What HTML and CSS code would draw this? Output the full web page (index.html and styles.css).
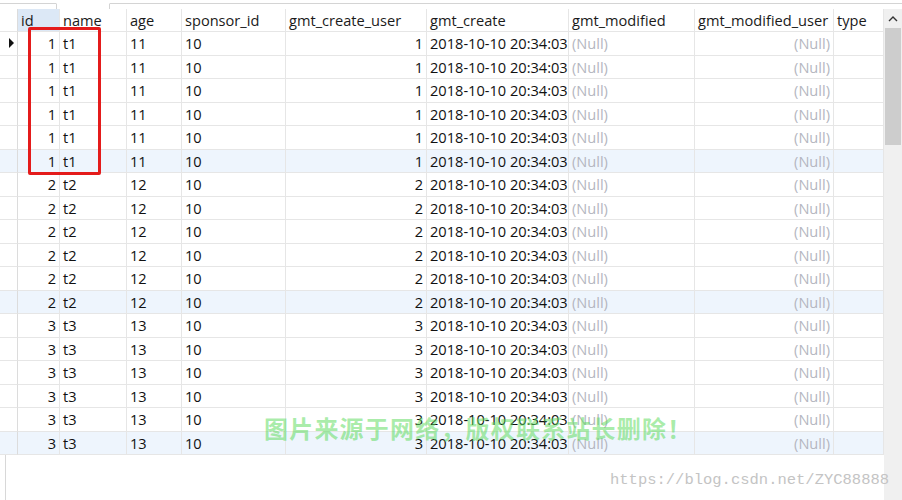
FILE: index.html
```html
<!DOCTYPE html>
<html>
<head>
<meta charset="utf-8">
<link rel="stylesheet" href="styles.css">
</head>
<body>
<div class="window">
  <div class="tabstrip"><span class="tab"></span><span class="tab tab-active"></span><span class="tab"></span></div>
  <div class="main">
    <div class="grid">
      <div class="row head">
        <div class="cell ind"></div>
        <div class="cell sorted">id</div>
        <div class="cell">name</div>
        <div class="cell">age</div>
        <div class="cell">sponsor_id</div>
        <div class="cell">gmt_create_user</div>
        <div class="cell">gmt_create</div>
        <div class="cell">gmt_modified</div>
        <div class="cell">gmt_modified_user</div>
        <div class="cell">type</div>
      </div>
      <div id="rows"></div>
      <div class="empty"></div>
    </div>
    <div class="scrollbar">
      <div class="sb-arrow"><svg width="10" height="7" viewBox="0 0 10 7"><path d="M1 6 L5 2 L9 6" fill="none" stroke="#333" stroke-width="1.4"/></svg></div>
      <div class="sb-thumb"></div>
    </div>
  </div>
  <div class="redbox"></div>
  <div class="wm-cn">图片来源于网络，版权联系站长删除！</div>
  <div class="wm-url">https://blog.csdn.net/ZYC88888</div>
</div>
<script src="app.js"></script>
</body>
</html>
```
FILE: app.js
```js
const rows = document.getElementById('rows');
let html = '';
for (let i = 0; i < 18; i++) {
  const g = Math.floor(i / 6) + 1;
  const hl = (i % 6 === 5) ? ' hl' : '';
  html += '<div class="row' + hl + '">' +
    '<div class="cell ind">' + (i === 0 ? '<span class="tri"></span>' : '') + '</div>' +
    '<div class="cell num">' + g + '</div>' +
    '<div class="cell">t' + g + '</div>' +
    '<div class="cell">' + (10 + g) + '</div>' +
    '<div class="cell">10</div>' +
    '<div class="cell num">' + g + '</div>' +
    '<div class="cell">2018-10-10 20:34:03</div>' +
    '<div class="cell null">(Null)</div>' +
    '<div class="cell null num">(Null)</div>' +
    '<div class="cell"></div>' +
    '</div>';
}
rows.innerHTML = html;
```
FILE: styles.css
```css
html, body {
  margin: 0;
  padding: 0;
  background: #fff;
}
.window {
  position: relative;
  width: 902px;
  height: 500px;
  overflow: hidden;
  font-family: "Open Sans", "Noto Sans CJK SC", sans-serif;
  font-size: 14.6px;
  color: #111;
}
.tabstrip {
  height: 9px;
  box-sizing: border-box;
  border-top: 3px solid #fff;
  display: flex;
}
.tab {
  width: 56px;
  border-top: 1px solid #d4d4d4;
}
.tab-active {
  width: 52px;
  border-top-color: #fff;
  border-left: 1px solid #d4d4d4;
  border-right: 1px solid #d4d4d4;
}
.tab:last-child {
  flex: 1;
}
.main {
  display: flex;
  height: 491px;
}
.grid {
  width: 884px;
  display: flex;
  flex-direction: column;
}
.row {
  display: grid;
  grid-template-columns: 18px 42px 67px 55px 104px 141px 142px 126px 139px 50px;
  height: 23.5px;
}
.row.head {
  height: 23px;
}
.row.hl {
  background: #eef5fd;
}
.cell {
  box-sizing: border-box;
  border-right: 1px solid #e6e6e6;
  border-bottom: 1px solid #e6e6e6;
  padding: 0 3px;
  line-height: 22px;
  white-space: nowrap;
  overflow: hidden;
}
.head .cell {
  color: #1a1a1a;
}
.head .sorted {
  background: #dce8f6;
}
.ind {
  position: relative;
  padding: 0;
  border-right-color: #dcdcdc;
}
.tri {
  position: absolute;
  left: 9px;
  top: 6px;
  width: 0;
  height: 0;
  border-top: 5px solid transparent;
  border-bottom: 5px solid transparent;
  border-left: 5px solid #111;
}
.num {
  text-align: right;
}
.null {
  color: #b4b6c0;
}
.empty {
  flex: 1;
  margin-left: 5px;
  border-left: 1px solid #d8d8d8;
}
.scrollbar {
  width: 18px;
  background: #f0f0f0;
  display: flex;
  flex-direction: column;
}
.sb-arrow {
  height: 19px;
  display: flex;
  align-items: center;
  justify-content: center;
}
.sb-thumb {
  height: 117px;
  margin: 0 1px;
  background: #cdcdcd;
}
.redbox {
  position: absolute;
  left: 28px;
  top: 27px;
  width: 73px;
  height: 148px;
  box-sizing: border-box;
  border: 3.5px solid #e41b1b;
  border-radius: 2px;
}
.wm-cn {
  position: absolute;
  left: 264px;
  top: 413px;
  font-family: "Noto Sans CJK SC", sans-serif;
  font-weight: bold;
  font-size: 24px;
  letter-spacing: 1.2px;
  color: rgba(95, 220, 95, 0.55);
  line-height: 30px;
  white-space: nowrap;
}
.wm-url {
  position: absolute;
  left: 610px;
  top: 470px;
  font-family: "Liberation Mono", monospace;
  font-size: 15.5px;
  line-height: 20px;
  color: #c4c4c4;
  white-space: nowrap;
}
```
